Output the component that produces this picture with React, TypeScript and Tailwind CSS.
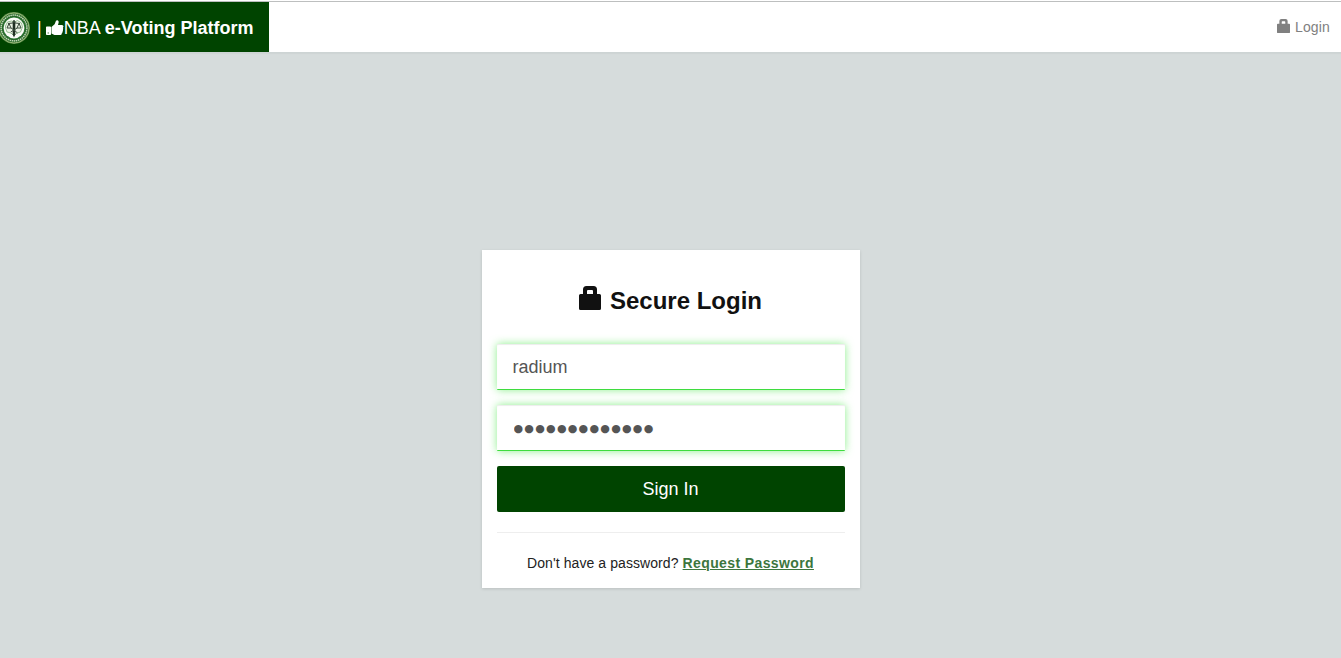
import React from 'react';

function Lock({ className }: { className: string }) {
  return (
    <svg viewBox="0 0 22 24" className={className} fill="currentColor" preserveAspectRatio="none">
      <path
        fillRule="evenodd"
        d="M4 8V3.500Q4 0 7.500 0h7Q18 0 18 3.500V8h2.500Q22 8 22 9.500v13q0 1.500-1.500 1.500h-19Q0 24 0 22.500v-13Q0 8 1.500 8zM8 8h6V5q0-1-1-1H9Q8 4 8 5z"
      />
    </svg>
  );
}

function ThumbsUp() {
  return (
    <svg viewBox="0 0 18 16" className="h-4 w-[18px] shrink-0" fill="#fff">
      <path
        fillRule="evenodd"
        d="M.8 6.500h3.400q.8 0 .8.800v6.900q0 .8-.8.800H.8q-.8 0-.8-.8V7.300q0-.8.8-.8zM1.700 12.600v1h1v-1z"
      />
      <path d="M5.500 7 8.600 4.200 10 .8Q10.500 0 11.500.2q1.400.4 1.200 2L12 5h4q1.500.2 1.500 1.700l-.6 1.100q.7.800 0 2.100.4 1.200-.5 2 .2 1.200-.7 1.700.1 1.500-1.400 1.500H8.500L5.500 13.600z" />
    </svg>
  );
}

function Seal() {
  return (
    <svg viewBox="0 0 32 32" className="-ml-0.5 size-8 shrink-0">
      <circle cx="16" cy="16" r="15.900" fill="#5d8f4a" />
      <circle cx="16" cy="16" r="15" fill="none" stroke="#a8c088" strokeWidth=".8" />
      <circle cx="16" cy="16" r="14.300" fill="#236626" />
      <circle cx="16" cy="16" r="12.900" fill="none" stroke="#c3d6b8" strokeWidth="1.500" strokeDasharray="1.500 .6" />
      <circle cx="16" cy="16" r="11.300" fill="#2f7435" />
      <circle cx="16" cy="16" r="10.400" fill="#fbfcf8" />
      <path d="M7.500 14l2-4 4-1 3 1 3-1.500 4 2.500 1 4-2 5-3.500 1-3 3-3-3-4-1-1.500-4z" fill="#eaf2e4" stroke="#8fb88b" strokeWidth=".9" />
      <path d="M14.700 9h2.600v13.500l-1.300 3-1.300-3z" fill="#1f2f22" />
      <path d="M10 11.500l5-.500 1-3 1 3 5 .5M11 11.500 9 16h4zM21 11.500 19 16h4zM12.800 20l6.400-4M13 16l3 2 3.500 3" fill="none" stroke="#3b4c3d" strokeWidth="1" />
    </svg>
  );
}

const field =
  'block h-[46px] w-full rounded-[1px] border-b border-[#3fdc3f] bg-white text-[#555] outline-none shadow-[inset_0_1px_1px_rgba(0,0,0,0.075),0_0_8px_rgba(63,228,63,0.6)]';

export default function App() {
  return (
    <div className="flex h-[658px] flex-col overflow-hidden bg-[#d6dcdc] font-['Liberation_Sans',Arial,sans-serif] text-[14px] text-[#222]">
      <div className="h-px shrink-0 bg-white" />
      <header className="flex h-[52px] shrink-0 items-stretch justify-between border-y border-t-[#bdbfbf] border-b-[#cdd4d4] bg-white shadow-[0_1px_1px_rgba(0,0,0,0.03)]">
        <a href="#" className="flex w-[269px] items-center bg-[#004400] pt-0.5 text-[18px] leading-5 whitespace-nowrap text-white">
          <Seal />
          <span className="ml-[7px]">|</span>
          <span className="ml-[4px] flex"><ThumbsUp /></span>
          <span className="-ml-px tracking-[0.010px]">
            <span className="ml-px">NBA</span> <b>e-Voting Platform</b>
          </span>
        </a>
        <a href="#" className="flex items-center gap-[5px] pr-[11px] text-[#808080]">
          <Lock className="mb-[2px] h-[14px] w-[13px]" />
          <span className="tracking-[0.150px]">Login</span>
        </a>
      </header>
      <main className="flex flex-1 justify-center pt-[197px]">
        <section className="h-[338px] w-[378px] bg-white px-[15px] shadow-[0_1px_3px_rgba(0,0,0,0.13)]">
          <h1 className="flex h-[94px] items-start justify-center pt-9 text-[24px] leading-[30px] font-bold text-[#111]">
            <Lock className="mr-[9px] h-6 w-[22px]" />
            <span>Secure Login</span>
          </h1>
          <form onSubmit={(e) => e.preventDefault()}>
            <input className={`${field} px-4 pt-0.5 text-[18px]`} defaultValue="radium" aria-label="Username" />
            <input
              className={`${field} mt-[15px] px-[17px] pt-0.5 font-['DejaVu_Sans',sans-serif] text-[11px] tracking-[1.250px]`}
              defaultValue="●●●●●●●●●●●●●"
              aria-label="Password"
            />
            <button className="mt-[15px] block h-[46px] w-full rounded-[2px] bg-[#004400] text-[18px] text-white">
              Sign In
            </button>
          </form>
          <hr className="mt-5 border-[#eee]" />
          <p className="pt-5 text-center leading-5 tracking-[0.080px]">
            Don't have a password?{' '}
            <a href="#" className="font-bold tracking-[0.380px] text-[#3c763d] underline">Request Password</a>
          </p>
        </section>
      </main>
    </div>
  );
}
